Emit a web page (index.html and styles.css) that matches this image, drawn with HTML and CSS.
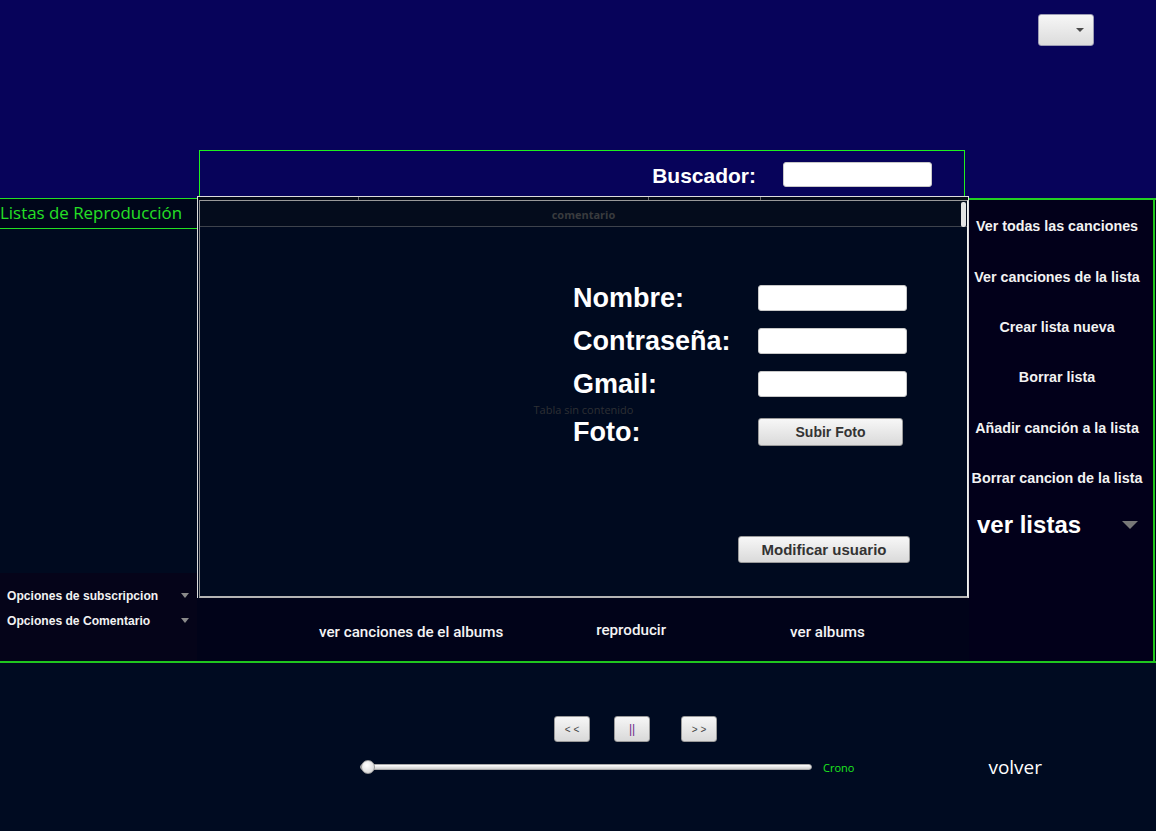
FILE: index.html
```html
<!DOCTYPE html>
<html lang="es">
<head>
<meta charset="utf-8">
<title>Reproductor</title>
<link rel="stylesheet" href="styles.css">
</head>
<body>
<div class="app">
  <header class="top">
    <div class="top-bar">
      <div class="combo"><span class="caret dark"></span></div>
    </div>
    <div class="search-box">
      <span class="search-label">Buscador:</span>
      <span class="field search-field"></span>
    </div>
  </header>

  <main class="middle">
    <aside class="lists">
      <h2 class="lists-title">Listas de Reproducción</h2>
      <div class="lists-body"></div>
      <div class="options">
        <div class="opt"><span>Opciones de subscripcion</span><span class="caret grey small"></span></div>
        <div class="opt"><span>Opciones de Comentario</span><span class="caret grey small"></span></div>
      </div>
    </aside>

    <section class="center">
      <div class="table">
        <div class="col-strip">
          <span class="col-line l1"></span>
          <span class="col-line l2"></span>
          <span class="col-line l3"></span>
        </div>
        <div class="inner">
          <div class="thead">comentario</div>
          <span class="thumb"></span>
          <div class="tbody">
            <span class="empty">Tabla sin contenido</span>
            <form class="user-form">
              <label class="flabel">Nombre:</label>
              <span class="field"></span>
              <label class="flabel">Contraseña:</label>
              <span class="field"></span>
              <label class="flabel">Gmail:</label>
              <span class="field"></span>
              <label class="flabel foto">Foto:</label>
              <span class="btn upload">Subir Foto</span>
              <span class="btn modify">Modificar usuario</span>
            </form>
          </div>
        </div>
      </div>
      <nav class="album-actions">
        <span class="act a1">ver canciones de el albums</span>
        <span class="act a2">reproducir</span>
        <span class="act a3">ver albums</span>
      </nav>
    </section>

    <aside class="menu">
      <div class="menu-item">Ver todas las canciones</div>
      <div class="menu-item">Ver canciones de la lista</div>
      <div class="menu-item">Crear lista nueva</div>
      <div class="menu-item">Borrar lista</div>
      <div class="menu-item">Añadir canción a la lista</div>
      <div class="menu-item">Borrar cancion de la lista</div>
      <div class="ver-listas"><span>ver listas</span><span class="caret grey big"></span></div>
    </aside>
  </main>

  <footer class="player">
    <div class="controls">
      <span class="pbtn">&lt; &lt;</span>
      <span class="pbtn pause">||</span>
      <span class="pbtn next">&gt; &gt;</span>
    </div>
    <div class="timeline">
      <div class="slider"><span class="knob"></span></div>
      <span class="crono">Crono</span>
      <span class="volver">volver</span>
    </div>
  </footer>
</div>
</body>
</html>
```

FILE: styles.css
```css
* { box-sizing: border-box; margin: 0; padding: 0; }

html, body {
  width: 1156px;
  height: 831px;
  overflow: hidden;
  background: #000a1f;
  font-family: "Liberation Sans", Arial, sans-serif;
}

.app {
  width: 1156px;
  height: 831px;
  display: flex;
  flex-direction: column;
}

/* ---------- top band ---------- */
.top {
  height: 196px;
  background: #07035a;
  display: flex;
  flex-direction: column;
}

.top-bar {
  height: 46px;
  padding-top: 14px;
  display: flex;
  justify-content: flex-end;
  padding-right: 62px;
}

.combo {
  width: 56px;
  height: 32px;
  border: 1px solid #9c9cb4;
  border-radius: 3px;
  background: linear-gradient(#f6f6f6, #dcdcdc);
  display: flex;
  align-items: center;
  justify-content: flex-end;
  padding-right: 9px;
}

.caret {
  display: inline-block;
  width: 0;
  height: 0;
  border-left: 4px solid transparent;
  border-right: 4px solid transparent;
  border-top: 4px solid #555;
}
.caret.dark { border-top-color: #4a4a4a; }
.caret.grey { border-top-color: #8a8a8a; }
.caret.small { border-left-width: 4px; border-right-width: 4px; border-top-width: 5px; }
.caret.big { border-left-width: 8px; border-right-width: 8px; border-top-width: 8px; border-top-color: #777; }

.search-box {
  margin-top: 104px;
  margin-left: 199px;
  width: 766px;
  height: 46px;
  border: 1px solid #1ef01e;
  border-bottom: none;
  display: flex;
  justify-content: flex-end;
  align-items: flex-start;
  padding-top: 11px;
  padding-right: 32px;
}

.search-label {
  color: #ffffff;
  font-weight: bold;
  font-size: 21px;
  line-height: 28px;
  margin-right: 27px;
}

.field {
  display: block;
  width: 149px;
  height: 26px;
  background: #ffffff;
  border: 1px solid #c8c8c8;
  border-radius: 3px;
}

.search-field { height: 25px; }

/* ---------- middle ---------- */
.middle {
  height: 467px;
  display: grid;
  grid-template-columns: 197px 772px 187px;
  border-bottom: 2px solid #1fc61f;
}

.lists {
  display: flex;
  flex-direction: column;
  border-top: 2px solid #07035a;
  background: #000a1f;
}

.lists-title {
  height: 31px;
  border-top: 1px solid #22e022;
  border-bottom: 1px solid #22e022;
  color: #25e025;
  font-family: "Open Sans", sans-serif;
  font-weight: normal;
  font-size: 16.9px;
  line-height: 28px;
  background: #00061a;
  white-space: nowrap;
}

.lists-body { flex: 1; }

.options {
  height: 88px;
  background: #050419;
  padding-top: 10px;
  padding-left: 7px;
  padding-right: 8px;
}

.opt {
  height: 25px;
  display: flex;
  align-items: center;
  justify-content: space-between;
  color: #f2f2f2;
  font-weight: bold;
  font-size: 12.1px;
}

/* center */
.center {
  display: flex;
  flex-direction: column;
}

.table {
  height: 402px;
  border: 1px solid #dcdcdc;
  border-bottom: none;
  display: flex;
  flex-direction: column;
  background: #000a1f;
}

.col-strip {
  height: 3px;
  position: relative;
  background: #050a18;
}

.col-line {
  position: absolute;
  top: 0;
  width: 1px;
  height: 3px;
  background: #6a6a6a;
}
.col-line.l1 { left: 160px; }
.col-line.l2 { left: 450px; }
.col-line.l3 { left: 562px; }

.inner {
  flex: 1;
  position: relative;
  margin-left: 1px;
  border-top: 1px solid #9a9a9a;
  border-left: 1px solid #8e8e8e;
  border-right: 1px solid #f0f0f0;
  border-bottom: 2px solid #b4b4b4;
  display: flex;
  flex-direction: column;
}

.thead {
  height: 26px;
  background: #040c1c;
  border-bottom: 1px solid #3e434c;
  text-align: center;
  font-family: "Open Sans", sans-serif;
  font-weight: bold;
  font-size: 11px;
  line-height: 27px;
  color: #393b3e;
}

.thumb {
  position: absolute;
  right: 1px;
  top: 1px;
  width: 5px;
  height: 25px;
  border-radius: 2px;
  background: #e4e4e4;
}

.tbody {
  flex: 1;
  position: relative;
  display: flex;
  align-items: center;
  justify-content: center;
}

.empty {
  font-family: "Open Sans", sans-serif;
  font-size: 11px;
  color: #2e3034;
  margin-top: -4px;
}

.user-form {
  position: absolute;
  left: 373px;
  top: 58px;
  display: grid;
  grid-template-columns: 185px 149px;
  grid-template-rows: 26px 26px 26px 28px;
  row-gap: 17px;
  align-items: center;
}

.flabel {
  color: #ffffff;
  font-weight: bold;
  font-size: 27px;
  line-height: 30px;
  white-space: nowrap;
}

.flabel.foto,
.upload { margin-top: 8px; }

.btn {
  display: flex;
  align-items: center;
  justify-content: center;
  background: linear-gradient(#f7f7f7, #dadada);
  border: 1px solid #9a9a9a;
  border-radius: 3px;
  color: #333;
  font-weight: bold;
  white-space: nowrap;
}

.upload {
  width: 145px;
  height: 28px;
  font-size: 14px;
}

.modify {
  grid-column: 1 / 3;
  margin-top: 77px;
  margin-left: 165px;
  width: 172px;
  height: 27px;
  font-size: 15px;
}

.album-actions {
  flex: 1;
  background: #010319;
  display: flex;
  align-items: center;
  padding-top: 4px;
}

.act {
  color: #f4f4f4;
  font-family: Roboto, sans-serif;
  font-weight: 500;
  font-size: 15.2px;
  white-space: nowrap;
}
.a1 { margin-left: 122px; }
.a2 { margin-left: 93px; margin-top: -3px; }
.a3 { margin-left: 124px; }

/* right menu */
.menu {
  border-top: 2px solid #07035a;
  display: flex;
  flex-direction: column;
  background: #02001a;
  position: relative;
}

.menu::before {
  content: "";
  display: block;
  height: 2px;
  background: #22d022;
  flex: none;
}

.menu::after {
  content: "";
  position: absolute;
  right: 1px;
  top: 0;
  bottom: 0;
  width: 2px;
  background: #22c81e;
}

.menu-item {
  height: 50.4px;
  flex: none;
  display: flex;
  align-items: center;
  justify-content: center;
  padding-right: 11px;
  color: #f2f2f2;
  font-weight: bold;
  font-size: 14.3px;
  white-space: nowrap;
}
.menu-item:first-of-type { margin-top: 1px; }

.ver-listas {
  height: 44px;
  display: flex;
  align-items: center;
  justify-content: space-between;
  padding-left: 8px;
  padding-right: 18px;
  color: #ffffff;
  font-weight: bold;
  font-size: 24px;
}

/* ---------- player ---------- */
.player {
  flex: 1;
  background: #000b21;
  display: flex;
  flex-direction: column;
}

.controls {
  display: flex;
  margin-top: 53px;
  margin-left: 554px;
}

.pbtn {
  width: 36px;
  height: 26px;
  display: flex;
  align-items: center;
  justify-content: center;
  background: linear-gradient(#f6f6f6, #d9d9d9);
  border: 1px solid #9a9a9a;
  border-radius: 3px;
  color: #444;
  font-size: 10px;
}
.pbtn.pause { margin-left: 24px; color: #6a2a8a; font-size: 12px; }
.pbtn.next { margin-left: 31px; }

.timeline {
  display: flex;
  align-items: center;
  height: 20px;
  margin-top: 15px;
  margin-left: 360px;
}

.slider {
  position: relative;
  width: 452px;
  height: 6px;
  border-radius: 3px;
  background: linear-gradient(#ffffff, #cfcfcf);
  border: 1px solid #aaa;
}

.knob {
  position: absolute;
  left: 0;
  top: -5px;
  width: 14px;
  height: 14px;
  border-radius: 50%;
  background: radial-gradient(circle at 40% 35%, #ffffff, #cfcfcf);
  border: 1px solid #999;
}

.crono {
  margin-left: 11px;
  color: #1ee81e;
  font-family: "Open Sans", sans-serif;
  font-size: 11px;
}

.volver {
  margin-left: 134px;
  color: #ffffff;
  font-family: "Open Sans", sans-serif;
  font-size: 19px;
}
```
